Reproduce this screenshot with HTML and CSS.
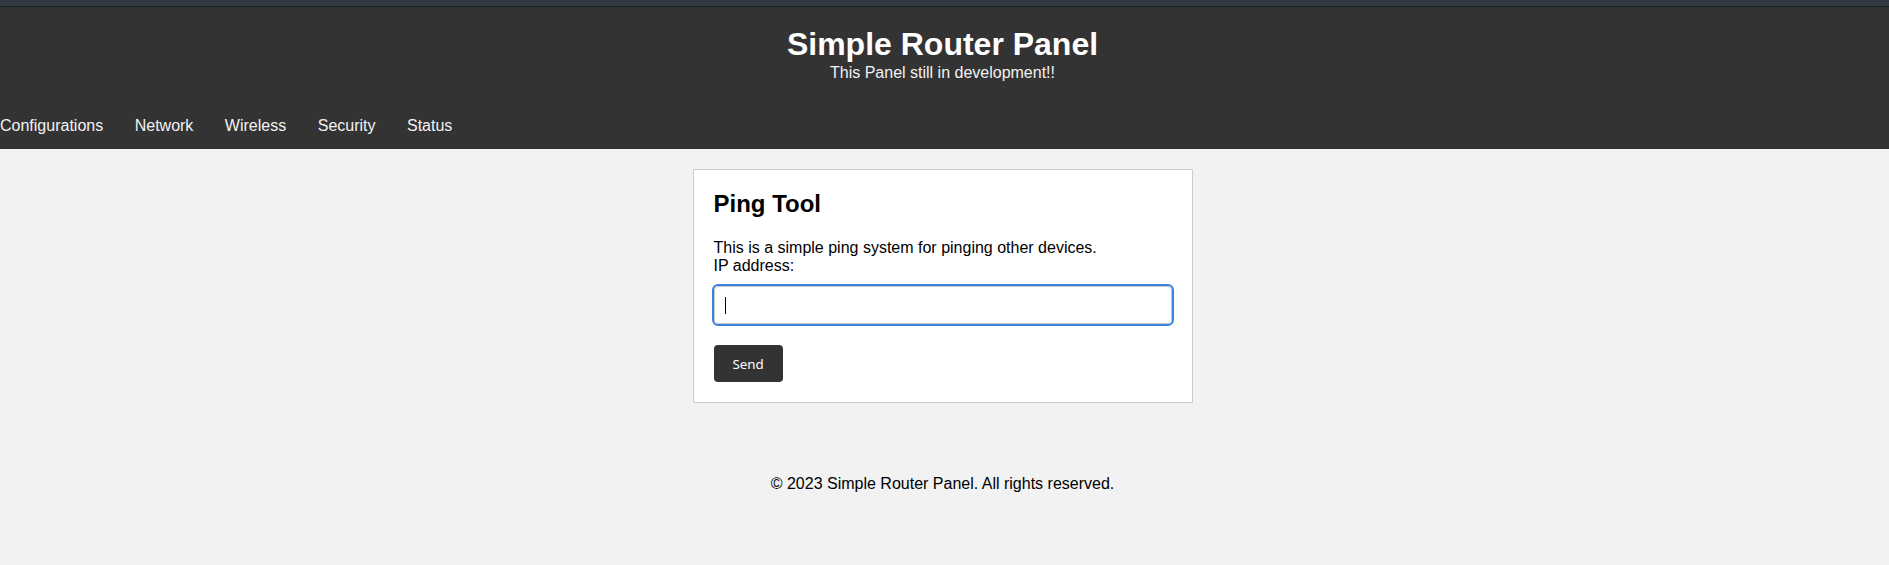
FILE: index.html
```
<!DOCTYPE html>
<html lang="en">
<head>
<meta charset="utf-8">
<title>Simple Router Panel</title>
<link rel="stylesheet" href="styles.css">
</head>
<body>
<div class="topbar"></div>
<header class="site-header">
  <h1 class="site-title">Simple Router Panel</h1>
  <p class="tagline">This Panel still in development!!</p>
  <nav class="main-nav">
    <ul class="nav-list">
      <li><a href="#">Configurations</a></li>
      <li><a href="#">Network</a></li>
      <li><a href="#">Wireless</a></li>
      <li><a href="#">Security</a></li>
      <li><a href="#">Status</a></li>
    </ul>
  </nav>
</header>
<main class="content">
  <section class="card">
    <h2 class="card-title">Ping Tool</h2>
    <p class="card-text">This is a simple ping system for pinging other devices.<br><label for="ip">IP address:</label></p>
    <div class="input-wrap">
      <input id="ip" class="ip-input" type="text">
    </div>
    <button class="send-btn" type="button">Send</button>
  </section>
</main>
<footer class="site-footer">
  <p>&copy; 2023 Simple Router Panel. All rights reserved.</p>
</footer>
</body>
</html>
```
FILE: styles.css
```
html, body {
  margin: 0;
  padding: 0;
}
body {
  background: #f2f2f2;
  font-family: "Liberation Sans", Arial, sans-serif;
  font-size: 16px;
  color: #000;
}
.topbar {
  height: 6px;
  background: #343a44;
  border-bottom: 1px solid #1b1e23;
}
.site-header {
  background: #333333;
  color: #fff;
  text-align: center;
  padding: 19px 4px 0 0;
}
.site-title {
  margin: 0;
  font-size: 32px;
  font-weight: bold;
  line-height: normal;
}
.tagline {
  margin: 1px 0 0;
  font-size: 16px;
  color: #f2f2f2;
}
.main-nav {
  margin-top: 21px;
  text-align: left;
}
.nav-list {
  list-style: none;
  margin: 0;
  padding: 0;
  display: flex;
  gap: 31.5px;
}
.nav-list a {
  display: block;
  padding: 14px 0;
  color: #f2f2f2;
  text-decoration: none;
}
.content {
  padding: 20px 4px 0 0;
}
.card {
  box-sizing: border-box;
  width: 500px;
  margin: 0 auto;
  background: #fff;
  border: 1px solid #cccccc;
  padding: 20px;
}
.card-title {
  margin: 0 0 21px;
  font-size: 24px;
  font-weight: bold;
}
.card-text {
  margin: 0 0 11px;
}
.input-wrap {
  position: relative;
  margin-bottom: 21px;
}
.input-wrap::after {
  content: "";
  position: absolute;
  left: 11px;
  top: 11px;
  width: 1px;
  height: 17px;
  background: #000;
}
.ip-input {
  display: block;
  box-sizing: border-box;
  width: 100%;
  height: 38px;
  padding: 10px;
  border: 1px solid #c8c8c8;
  border-radius: 4px;
  outline: 2px solid #3a83df;
  outline-offset: 0;
  font-family: "Liberation Sans", Arial, sans-serif;
  font-size: 13.333px;
  caret-color: transparent;
  background: #fff;
}
.send-btn {
  display: block;
  height: 37px;
  padding: 0 19px;
  border: none;
  border-radius: 4px;
  background: #333333;
  color: #fff;
  font-family: "Noto Sans", "Open Sans", sans-serif;
  font-size: 13.333px;
  cursor: pointer;
}
.site-footer {
  text-align: center;
  padding: 0 4px 0 0;
}
.site-footer p {
  margin: 72px 0 20px;
}
```
